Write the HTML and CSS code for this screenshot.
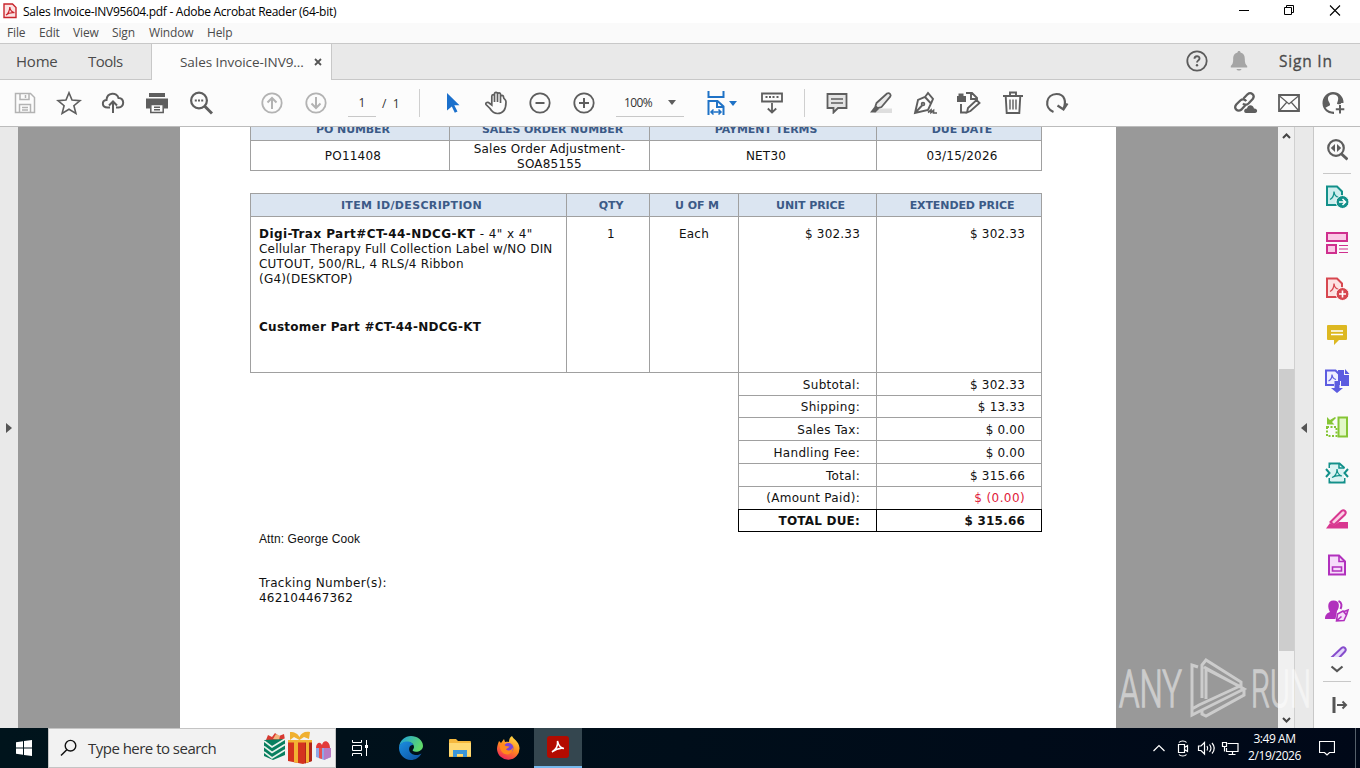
FILE: index.html
```html
<!DOCTYPE html>
<html lang="en">
<head>
<meta charset="UTF-8">
<meta name="viewport" content="width=device-width, initial-scale=1.0">
<title>Sales Invoice-INV95604.pdf - Adobe Acrobat Reader (64-bit)</title>
<link rel="stylesheet" href="styles.css">
</head>
<body>

<header class="titlebar">
    <svg class="app-icon" width="14" height="16" viewBox="0 0 14 16"><path d="M1 1h8.500l3.500 3.500v10H1z" fill="#fbe3e3" stroke="#c9252d" stroke-width="1.400"/><path d="M3 12c2-1 4-5 3.800-8C7 7 9 9.600 11.500 9.600 8 9.300 5 10 3 12z" fill="none" stroke="#c9252d" stroke-width="1.200"/></svg>
    <span class="title">Sales Invoice-INV95604.pdf - Adobe Acrobat Reader (64-bit)</span>
    <div class="window-buttons">
        <svg width="46" height="23" viewBox="0 0 46 23"><path d="M17 10.500h10" stroke="#000"/></svg>
        <svg width="46" height="23" viewBox="0 0 46 23"><path d="M16.500 7.500h7v7h-7zM18.500 7.500v-2h7v7h-2" fill="none" stroke="#000"/></svg>
        <svg width="46" height="23" viewBox="0 0 46 23"><path d="M16 5.500l10 10M26 5.500l-10 10" stroke="#000" stroke-width="1.100"/></svg>
    </div>
</header>

<nav class="menubar">
    <span class="m-file">File</span>
    <span class="m-edit">Edit</span>
    <span class="m-view">View</span>
    <span class="m-sign">Sign</span>
    <span class="m-window">Window</span>
    <span class="m-help">Help</span>
</nav>

<div class="tabs">
    <span class="tab home">Home</span>
    <span class="tab tools">Tools</span>
    <div class="tab active">
        <span class="doc-name">Sales Invoice-INV9...</span>
        <svg width="8" height="8" viewBox="0 0 8 8"><path d="M1 1l6 6M7 1L1 7" stroke="#555" stroke-width="1.800"/></svg>
    </div>
    <div class="tabs-right">
        <svg width="22" height="22" viewBox="0 0 22 22"><circle cx="11" cy="11" r="9.700" fill="none" stroke="#5c5c5c" stroke-width="1.800"/><path d="M8.500 8.800c0-3.300 5-3.300 5-.4 0 2-2.500 2-2.500 4.200" fill="none" stroke="#5c5c5c" stroke-width="1.900"/><circle cx="11" cy="15.300" r="1.200" fill="#5c5c5c"/></svg>
        <svg width="18" height="22" viewBox="0 0 18 22"><path d="M9 1c1 0 1.500.6 1.500 1.500C14 3.500 14.800 6 14.800 9c0 4 .7 5.500 2.400 7v1.500H.8V16c1.700-1.500 2.400-3 2.400-7 0-3 .8-5.500 4.300-6.500C7.500 1.600 8 1 9 1zM6.500 19h5c-.5 2-4.500 2-5 0z" fill="#a5a5a5"/></svg>
        <span class="sign-in">Sign In</span>
    </div>
</div>

<div class="toolbar">
    <div class="group">
        <div class="tool"><svg class="light" width="22" height="22" viewBox="0 0 22 22"><path d="M1.500 1.500h15l4 4v15h-19zM6 1.500v6h9v-6M11.500 3v3M5.500 20v-7.500h11V20M8 15.500h6M8 18h6" stroke-width="1.500"/></svg></div>
        <div class="tool"><svg width="26" height="24" viewBox="0 0 26 24"><path d="M13 1.800l3 7.300 8 .6-6.100 5 2 7.700L13 18.200l-6.900 4.200 2-7.700L2 9.700l8-.6z" stroke-width="1.600"/></svg></div>
        <div class="tool"><svg width="24" height="22" viewBox="0 0 24 22"><path d="M9 15.500H6.500C.5 15.500.500 8.500 5.500 8 6 0 16 0 17.500 6c6-.5 6.500 9.500 0 9.500H15M12 21V9.500M8 13.500l4-4 4 4" stroke-width="2"/></svg></div>
        <div class="tool"><svg width="22" height="22" viewBox="0 0 22 22"><path class="fill" d="M3 1h16v4H3zM0 6.500h22v10h-4v-4H4v4H0z"/><path d="M4.800 12.500h12.400v8H4.800zM8 15.200h6M8 17.800h6" stroke-width="1.500"/></svg></div>
        <div class="tool"><svg width="24" height="24" viewBox="0 0 24 24"><circle cx="10" cy="9.500" r="7.900" stroke-width="2.200"/><path d="M15.500 15l7.500 7.500" stroke-width="3"/><path d="M5.800 9.500h2M9 9.500h2M12.200 9.500h2" stroke-width="2"/></svg></div>
    </div>
    <div class="group pages">
        <div class="tool"><svg class="light" width="22" height="22" viewBox="0 0 22 22"><circle cx="11" cy="11" r="9.700"/><path d="M11 17V6M6.500 10.500L11 6l4.500 4.500" stroke-width="2"/></svg></div>
        <div class="tool"><svg class="light" width="22" height="22" viewBox="0 0 22 22"><circle cx="11" cy="11" r="9.700"/><path d="M11 5v11M6.500 11.500L11 16l4.500-4.500" stroke-width="2"/></svg></div>
        <span class="page-field">1</span>
        <span class="page-total">/&nbsp; 1</span>
    </div>
    <div class="divider"></div>
    <div class="group">
        <div class="tool pointer"><svg width="14" height="20" viewBox="0 0 14 20"><path d="M1 0l12.500 12.300H8.300l3.200 6.200-2.700 1.300-3-6.300L1 17.500z" fill="#1b70cc" stroke="none"/></svg></div>
        <div class="tool"><svg width="24" height="24" viewBox="0 0 24 24"><path d="M7.800 14V5.300c0-2.300 2.700-2.300 2.700 0V11 3c0-2.300 3-2.300 3 0v8V3.500c0-2.300 3-2.300 3 0V12 6c0-2.300 3-2.300 3 0 .3 3 2.500 2 2.500 5 0 6-1.500 11.500-8.500 11.500-4 0-6-2.500-7.500-5L2 13.500c-1-2 2-3 3.500-1.200z" stroke-width="1.700"/></svg></div>
        <div class="tool"><svg width="22" height="22" viewBox="0 0 22 22"><circle cx="11" cy="11" r="9.700"/><path d="M6.500 11h9" stroke-width="2"/></svg></div>
        <div class="tool"><svg width="22" height="22" viewBox="0 0 22 22"><circle cx="11" cy="11" r="9.700"/><path d="M6 11h10M11 6v10" stroke-width="2"/></svg></div>
    </div>
    <div class="zoom-field"><span>100%</span><i class="caret"></i></div>
    <div class="fit">
        <svg width="18" height="24" viewBox="0 0 18 24"><path d="M1.500 0v6h15V0M1.500 24V10h9l6 5.500V24M10 10.500v5.500h6.500" stroke="#1f72c6" stroke-width="2"/><path d="M4 21h10M6.500 18.500L4 21l2.500 2.500M11.500 18.500L14 21l-2.500 2.500" stroke="#1f72c6" stroke-width="1.500"/></svg>
        <i class="caret blue"></i>
    </div>
    <div class="tool keys"><svg width="22" height="22" viewBox="0 0 22 22"><path d="M1 1.500h20v8H1zM11 11v9M6.800 16.500L11 20.500l4.200-4"/><path d="M4.500 5h2M8 5h2M11.500 5h2M15.500 5h2" stroke-width="1.800"/></svg></div>
    <div class="divider second"></div>
    <div class="group">
        <div class="tool"><svg width="22" height="22" viewBox="0 0 22 22"><path d="M1.500 2h19v14H12l-4.500 4.500V16h-6z" fill="#e4e4e4"/><path d="M5 7h12M5 11h12" stroke-width="1.500"/></svg></div>
        <div class="tool"><svg width="24" height="24" viewBox="0 0 24 24"><path d="M9 17.500h14v4.500H5z" fill="#dedede" stroke="none"/><path d="M7.500 12L18 2.500c2.200-1.300 4.700 1 3.200 3.200L12.500 16l-4 1.200-2-2.200z" fill="#e9e9e9"/><path class="fill" d="M6 15l4 3-3.500 3.500H1z"/></svg></div>
        <div class="tool"><svg width="24" height="24" viewBox="0 0 24 24"><path d="M2 22l3-13 7-3 6 6.500-3 6.500zM2 22l7-7.500M12 6l3-4 5 6-2 4.500" stroke-width="1.900"/><circle cx="10" cy="13" r="1.400"/><path d="M15 21.500l3-2.500v2.500l2.500-2v2.500H24" stroke-width="1.700"/></svg></div>
        <div class="tool"><svg width="24" height="24" viewBox="0 0 24 24"><path d="M4 13v8.500h6M9 2h6l5 5v2M14 2v6h6M10 21.500l1-4.500 8.500-8 3 3-9 8z" stroke-width="1.900"/><path class="fill" d="M0 5h9v6H0zM1.500 2.500h5V6h-5z"/></svg></div>
        <div class="tool"><svg width="20" height="24" viewBox="0 0 20 24"><path d="M0 5h20M7 5V1.500h6V5M2.700 5l1 17h12.600l1-17" stroke-width="1.900"/><path d="M7 8.500v10M10 8.500v10M13 8.500v10" stroke-width="1.400"/></svg></div>
        <div class="tool"><svg width="24" height="22" viewBox="0 0 24 22"><path d="M8.500 20C-1.500 16 1 2 11.500 2 20 2 21.500 10 18.500 16.500" stroke-width="2.200"/><path d="M22.500 11.500l-4 6-6-4" stroke-width="2.200"/></svg></div>
    </div>
    <div class="group share">
        <div class="tool"><svg width="26" height="24" viewBox="0 0 26 24"><path d="M11.500 7.500l4-4.200c3.500-3 8 1 5.200 4.700l-4.200 4.500c-2 1.800-4 1.500-5.500 0M13.500 14L9.500 18.500c-4 3-8.200-1-5.200-5l4-4c2.300-2 4.700-1 5.900.7" stroke-width="2.300"/><path class="fill" d="M14 22c-3-.5-2-5 1-4.500 1-4.500 6-4 7 0 4-.3 4 4.300 1 4.500z"/></svg></div>
        <div class="tool"><svg width="22" height="18" viewBox="0 0 22 18"><path d="M1 1h20v16H1z"/><path d="M1 1.500l10 8.500 10-8.500M1.500 16.500l7-8M20.500 16.500l-7-8" stroke-width="1.200"/></svg></div>
        <div class="tool"><svg width="24" height="24" viewBox="0 0 24 24"><path class="fill" d="M12 1a10.500 10.500 0 0 1 10.500 11h-2.300c-.2 1.200-1.500 1.600-4 1-.5-1 .8-2 1-5.500C17.200 2.200 7 2.200 7 7.500c0 3.500 2.500 4.500 2 6.500-.3 1.200-3 1.500-4.500 2.800 2 2.600 5 4 8.500 4V23A11 11 0 1 1 12 1z"/><path d="M19 14v8.500M14.800 18.200h8.500" stroke-width="2"/></svg></div>
    </div>
</div>

<main class="workspace">
    <div class="nav-strip"><i class="arrow right"></i></div>
    <div class="canvas">
        <article class="page">
            <section class="grid order">
                <div class="head">PO NUMBER</div>
                <div class="head">SALES ORDER NUMBER</div>
                <div class="head">PAYMENT TERMS</div>
                <div class="head">DUE DATE</div>
                <div class="cell">PO11408</div>
                <div class="cell tight">Sales Order Adjustment-<br>SOA85155</div>
                <div class="cell">NET30</div>
                <div class="cell">03/15/2026</div>
            </section>

            <section class="grid items">
                <div class="head wide">ITEM ID/DESCRIPTION</div>
                <div class="head">QTY</div>
                <div class="head">U OF M</div>
                <div class="head">UNIT PRICE</div>
                <div class="head">EXTENDED PRICE</div>
                <div class="cell description">
                    <p><span class="part"><b>Digi-Trax Part#CT-44-NDCG-KT</b> - 4" x 4"</span><br>Cellular Therapy Full Collection Label w/NO DIN<br>CUTOUT, 500/RL, 4 RLS/4 Ribbon<br>(G4)(DESKTOP)</p>
                    <p><b>Customer Part #CT-44-NDCG-KT</b></p>
                </div>
                <div class="cell top">1</div>
                <div class="cell top unit">Each</div>
                <div class="cell top money">$ 302.33</div>
                <div class="cell top money">$ 302.33</div>
            </section>

            <section class="grid totals">
                <div class="cell money label">Subtotal:</div><div class="cell money">$ 302.33</div>
                <div class="cell money label">Shipping:</div><div class="cell money">$ 13.33</div>
                <div class="cell money label">Sales Tax:</div><div class="cell money">$ 0.00</div>
                <div class="cell money label">Handling Fee:</div><div class="cell money">$ 0.00</div>
                <div class="cell money label">Total:</div><div class="cell money">$ 315.66</div>
                <div class="cell money label">(Amount Paid):</div><div class="cell money paid">$ (0.00)</div>
            </section>
            <section class="grid due">
                <div class="cell money">TOTAL DUE:</div><div class="cell money">$ 315.66</div>
            </section>

            <p class="attn">Attn: George Cook</p>
            <p class="tracking"><span>Tracking Number(s):</span><br>462104467362</p>
        </article>
    </div>
    <div class="scrollbar">
        <svg width="15" height="17" viewBox="0 0 15 17"><path d="M4 11l3.500-3.500L11 11" fill="none" stroke="#444" stroke-width="2"/></svg>
        <div class="thumb"></div>
        <svg width="15" height="17" viewBox="0 0 15 17"><path d="M4 7l3.500 3.500L11 7" fill="none" stroke="#444" stroke-width="2"/></svg>
    </div>
    <div class="tools-strip"><i class="arrow left"></i></div>
    <aside class="tools-panel">
        <div class="side"><svg width="22" height="22" viewBox="0 0 22 22"><circle cx="10" cy="9" r="7.800" stroke="#5e5e5e" stroke-width="2.200"/><path d="M15 14.500l6.500 6" stroke="#5e5e5e" stroke-width="3"/><path d="M9 5v8L4.800 9zM11 5v8l4.200-4z" fill="#5e5e5e"/></svg></div>
        <div class="line"></div>
        <div class="side"><svg width="24" height="24" viewBox="0 0 24 24"><path d="M2 1.500h10l5 5V20H2z" fill="#cfeeee" stroke="#12908a" stroke-width="2"/><path d="M5 14.500c3-1.500 4-4.500 4-8 .3 3.500 2 5.500 5 6" stroke="#12908a" stroke-width="1.300"/><circle cx="17.500" cy="17" r="6.500" fill="#12908a" stroke="#fff" stroke-width="1"/><path d="M14 17h6M17.500 14l3 3-3 3" stroke="#fff" stroke-width="1.500"/></svg></div>
        <div class="side"><svg width="24" height="24" viewBox="0 0 24 24"><path d="M2 2h20v8H2zM2 14h9v8H2z" fill="#fbc9e6" stroke="#cf2f8e" stroke-width="2"/><path d="M14 14.500h9M14 18h9M14 21.500h9" stroke="#cf2f8e" stroke-width="1"/></svg></div>
        <div class="side"><svg width="24" height="24" viewBox="0 0 24 24"><path d="M2 1.500h10l5 5V20H2z" fill="#fde3e3" stroke="#d7474f" stroke-width="2"/><path d="M5 14.500c3-1.500 4-4.500 4-8 .3 3.500 2 5.500 5 6" stroke="#d7474f" stroke-width="1.300"/><circle cx="17.500" cy="17" r="6.500" fill="#d7474f" stroke="#fff" stroke-width="1"/><path d="M14 17h7M17.500 13.500v7" stroke="#fff" stroke-width="1.600"/></svg></div>
        <div class="side"><svg width="22" height="22" viewBox="0 0 22 22"><path d="M2 1h18q1 0 1 1v13q0 1-1 1h-7l-5 5v-5H2q-1 0-1-1V2q0-1 1-1z" fill="#ddb821"/><path d="M5 7h12M5 10.500h12" stroke="#fff" stroke-width="1.600"/></svg></div>
        <div class="side"><svg width="26" height="24" viewBox="0 0 26 24"><path d="M10 16H2V1.500h9.500L15 5v11" fill="#efefff" stroke="#5c5ce0" stroke-width="2"/><path d="M4.500 12c2.500-1 3.500-4 3.500-6.500.3 3 2 4.500 4 5" stroke="#5c5ce0" stroke-width="1.200"/><path d="M14 1h6v5h5v11h-8v-5h-3zM21 0l4.500 5H21zM10.500 12h5v7H19l-6 5-6-5h3.500z" fill="#5c5ce0"/></svg></div>
        <div class="side"><svg width="24" height="22" viewBox="0 0 24 22"><path d="M13.500 1.500H22v19h-8.500z" fill="#e2f7c7" stroke="#85c535" stroke-width="2"/><path d="M2 11h9.500v9H2z" stroke="#85c535" stroke-width="2" stroke-dasharray="2 1.500"/><path d="M2 1v7.500h7.500L7 6l4-4-1-1-5 3z" fill="#85c535"/></svg></div>
        <div class="side"><svg width="24" height="22" viewBox="0 0 24 22"><path d="M4.500 6V1.500h10l5 4.500M4.500 16v4.500h15V16" stroke="#12908a" stroke-width="2"/><path d="M5 3h9l5 4v12H5z" fill="#daf3f3"/><path d="M14 1v5h5.500" stroke="#12908a" stroke-width="1.500"/><path d="M7 15.500c4-1.500 5-5 5-8.500.3 3.500 2 6.500 5 7-4-.7-7-.3-10 1.500z" stroke="#12908a" stroke-width="1.200"/><path d="M1 7l3.500 4L1 15M23 7l-3.500 4 3.500 4" stroke="#12908a" stroke-width="2"/></svg></div>
        <div class="side"><svg width="24" height="22" viewBox="0 0 24 22"><path d="M1 20.500L5 15l4 2.500 5-3.500h9v6.500z" fill="#d83790"/><path d="M5.500 14L16.500 3c2.500-2 5.500 1 3.500 3.500L9 17z" fill="#fbd0e6" stroke="#d83790" stroke-width="2"/></svg></div>
        <div class="side"><svg width="20" height="22" viewBox="0 0 20 22"><path d="M2 1.500h10l6 6v13H2z" fill="#f6dcfa" stroke="#b130bd" stroke-width="2"/><path d="M12 1.500v6h6M5.500 13h9v4h-9z" stroke="#b130bd" stroke-width="1.600"/></svg></div>
        <div class="side"><svg width="26" height="24" viewBox="0 0 26 24"><path d="M1 20c0-4 2-6 5-7C3.500 9 3 1.500 9.500 1.500S16 8 13 12l-1.500 8z" fill="#b130bd"/><path d="M14.500 2c3.500 1.500 3.500 5 2 8" stroke="#b130bd" stroke-width="2"/><path d="M12.500 22l1-7 5.500-3 3.500 4-2.500 5.500zM12.500 22l5-4.500M20 12.500l4-1.500-1.500 5" fill="#f6dcfa" stroke="#b130bd" stroke-width="1.600"/></svg></div>
        <div class="side cut"><svg width="24" height="22" viewBox="0 0 24 22"><path d="M6 13L16.500 3c2.500-2 5.500 1 3.500 3.500L11 16z" fill="#e3d7fb" stroke="#864ccc" stroke-width="2"/></svg></div>
        <div class="more"><svg width="14" height="8" viewBox="0 0 14 8"><path d="M1.500 1.500L7 6l5.500-4.500" stroke="#555" stroke-width="2.200"/></svg></div>
        <div class="line"></div>
        <div class="side last"><svg width="16" height="16" viewBox="0 0 16 16"><path d="M2 0v16" stroke="#555" stroke-width="3"/><path d="M5 8h9M10.500 4.500L14 8l-3.500 3.500" stroke="#555" stroke-width="2"/></svg></div>
    </aside>
</main>

<footer class="taskbar">
    <div class="start"><svg width="16" height="16" viewBox="0 0 16 16"><path d="M0 2.200L7 1.200v6.300H0zM8 1.100L16 0v7.500H8zM0 8.500h7v6.300l-7-1zM8 8.500h8V16l-8-1.100z" fill="#fff"/></svg></div>
    <div class="search">
        <svg width="18" height="18" viewBox="0 0 18 18"><circle cx="10.500" cy="6.700" r="5.300" fill="none" stroke="#111" stroke-width="1.400"/><path d="M6.800 10.800L1 16.500" stroke="#111" stroke-width="1.500"/></svg>
        <span>Type here to search</span>
        <svg class="gifts" width="68" height="34" viewBox="0 0 68 34">
            <path d="M2 9l2-5 4 2 3-4 4 3 5-2 1 6z" fill="#d83a32"/><path d="M9 8l3-5 4 2-1 4z" fill="#f3b37c"/>
            <path d="M0 9l21-1v16L9 29 0 25z" fill="#087f5f"/><path d="M0 10l8 6 13-8M0 15.500l8 6 13-8M0 21l8 6 13-8" fill="none" stroke="#e9f3ec" stroke-width="1.600"/>
            <path d="M24 10h24v20l-9 3-15-3z" fill="#d4321f"/><path d="M41 10h7v20l-7 2.500z" fill="#b0261a"/><path d="M30 10h4v22l-4-.7zM42 10h3v21l-3 1zM24 9h24v2.500H24z" fill="#f2b233"/><path d="M26 1c5 0 8 2 9.500 5C37 2 41 0 46 1l-1 7-5-2-4.500 3L30 6l-4 3z" fill="#f0b030"/>
            <path d="M52 17h15v9l-7 3-8-3z" fill="#8fa8e8"/><path d="M60 17h7v9l-7 3z" fill="#b77bc4"/><path d="M55 17h3v11l-3-1z" fill="#e64f50"/><path d="M52 17c0-5 4-7 6-3 1-6 8-5 8 3z" fill="#e23b3b"/>
        </svg>
    </div>
    <div class="task view"><svg width="18" height="18" viewBox="0 0 18 18"><path d="M1.500 1v2.500h9V1M1.500 17v-2.500h9V17M1.500 6.500h9v5h-9zM15.500 1v16" fill="none" stroke="#fff"/><path d="M14 6h3v3h-3z" fill="#fff"/></svg></div>
    <div class="task edge">
        <svg width="24" height="24" viewBox="0 0 24 24">
            <defs><linearGradient id="edgeTop" x1="0" y1="0" x2="1" y2=".4"><stop offset="0" stop-color="#1b9de2"/><stop offset="1" stop-color="#5fd96a"/></linearGradient><linearGradient id="edgeLow" x1="0" y1="0" x2="1" y2="1"><stop offset="0" stop-color="#1b8ee0"/><stop offset="1" stop-color="#0c4f9e"/></linearGradient></defs>
            <path d="M0 11C1 4 6 0 12 0s12 4 12 10c0 5-7 7-10 5-1-1 1-2 1-4 0-3-3-5-6.500-5S1 8 0 11z" fill="url(#edgeTop)"/>
            <path d="M0 12c0-4 4-6.500 8-6.500 4 0 6 2 6 3.500-5-1-6 9 2 10 3 .4 5-.5 6.500-1.500C20 22 16 24 12 24 5 24 0 18 0 12z" fill="url(#edgeLow)"/>
        </svg>
    </div>
    <div class="task folder"><svg width="22" height="18" viewBox="0 0 22 18"><path d="M0 1q0-1 1-1h6l2 2h12q1 0 1 1v15H0z" fill="#f5b83d"/><path d="M0 4h22v13H0z" fill="#ffd972"/><path d="M4 18v-7h14v7h-4v-3H8v3z" fill="#3d96d8"/></svg></div>
    <div class="task firefox">
        <svg width="24" height="24" viewBox="0 0 24 24">
            <defs><linearGradient id="fox" x1=".8" y1="0" x2=".3" y2="1"><stop offset="0" stop-color="#ffe14a"/><stop offset=".5" stop-color="#ff8a1e"/><stop offset="1" stop-color="#f0245c"/></linearGradient></defs>
            <path d="M3 5l2 2 3-4 1 3c2-.5 3-.5 4 0 0-3 1-5 3-6 1 3 7 5 7.500 12A11 11 0 0 1 1 13c0-3 1-5 2-8z" fill="url(#fox)"/><circle cx="12.500" cy="12" r="5" fill="#7a45d8"/><path d="M3.500 9c3-2 5-1 6 1l4 .5c-1 2-3 1.500-3.500 3 3 2 5 1 7-2 0 5-4 8-8 6.500C5 17 4 12 3.500 9z" fill="#ff8a1e"/>
        </svg>
    </div>
    <div class="task running"><svg width="22" height="22" viewBox="0 0 22 22"><rect width="22" height="22" rx="3" fill="#b30b00"/><path d="M5 16c4-2.500 6-7 5.500-11 1 4.500 3 7 6.500 7.500-4.500-.8-8 .5-12 3.500z" fill="none" stroke="#fff" stroke-width="1.500"/></svg></div>
    <div class="tray">
        <svg width="24" height="20" viewBox="0 0 24 20"><path d="M6.500 13l5.500-5.500 5.500 5.500"/></svg>
        <svg width="24" height="20" viewBox="0 0 24 20"><path d="M7.500 6.500h6v8h-6zM13.500 9.500l3-2v6l-3-2M8 4.500c1.500-2 6-2 7.500 0M8 16.500c1.500 2 6 2 7.500 0"/></svg>
        <svg width="24" height="20" viewBox="0 0 24 20"><path d="M3.500 8v4.500h2.500l3.500 3.500V4.500L6 8zM12 8c1 1.500 1 3 0 4.500M14.500 6.500c2 2.500 2 5 0 7.500M17 5c3 3.500 3 7 0 10.500"/></svg>
        <svg width="24" height="20" viewBox="0 0 24 20"><path d="M8.500 5.500H19v8H7.500V10M13.500 13.500v3M9.500 16.500h7M3.500 4.500h4v4h-4zM5.500 8.500v5"/></svg>
        <div class="clock"><span>3:49 AM</span><br><span class="date">2/19/2026</span></div>
        <svg class="notify" width="16" height="16" viewBox="0 0 16 16"><path d="M.500 1.500h15v11h-5L8 15l-2.500-2.500h-5z"/></svg>
        <i class="show-desktop"></i>
    </div>
</footer>

<svg class="watermark" width="196" height="64" viewBox="0 0 196 64">
    <text x="1" y="51" textLength="63" lengthAdjust="spacingAndGlyphs">ANY</text>
    <text x="133" y="51" textLength="60" lengthAdjust="spacingAndGlyphs">RUN</text>
    <path d="M80 11l-6-2v44l7-4 41-19M84 42V9l4-5 35 22v5L88 13v30M74 52v7l8-4 44-22-40-22M84 54v4l4 2 38-21v-5"/>
</svg>

</body>
</html>
```
FILE: styles.css
```css
* {
    box-sizing: border-box;
}
body {
    margin: 0;
    width: 1360px;
    height: 768px;
    overflow: hidden;
    position: relative;
    display: flex;
    flex-direction: column;
    background: #fff;
    color: #111;
    font-family: "Open Sans", "Noto Sans", sans-serif;
    font-size: 12px;
}
p {
    margin: 0;
}
svg {
    display: block;
    flex: none;
}
span {
    white-space: nowrap;
}

/* window chrome */
.titlebar {
    height: 23px;
    flex: none;
    display: flex;
    align-items: center;
    padding-left: 3px;
    color: #000;
}
.app-icon {
    margin-top: -2px;
}
.title {
    margin-left: 6px;
    letter-spacing: -0.28px;
}
.window-buttons {
    display: flex;
    margin-left: auto;
}
.menubar {
    height: 20px;
    flex: none;
    display: flex;
    align-items: center;
    padding-left: 7px;
    padding-bottom: 2px;
    background: #fafafa;
    color: #4b4b4b;
    letter-spacing: -0.15px;
}
.m-file { width: 32px; }
.m-edit { width: 34px; }
.m-view { width: 39px; }
.m-sign { width: 37px; }
.m-window { width: 58px; }
.tabs {
    height: 37px;
    flex: none;
    display: flex;
    align-items: stretch;
    background: #e9e9e9;
    border-top: 1px solid #c8c8c8;
    border-bottom: 1px solid #c8c8c8;
    color: #4b4b4b;
}
.tab {
    display: flex;
    align-items: center;
    padding-bottom: 1px;
    font-size: 15px;
}
.home {
    width: 88px;
    padding-left: 16px;
    letter-spacing: -0.2px;
}
.tools {
    width: 63px;
    letter-spacing: -0.5px;
}
.tab.active {
    width: 181px;
    height: 36px;
    padding-left: 28px;
    background: #fcfcfc;
    border-left: 1px solid #c8c8c8;
    border-right: 1px solid #c8c8c8;
}
.doc-name {
    width: 134px;
    font-size: 13.5px;
    letter-spacing: -0.05px;
}
.tabs-right {
    display: flex;
    align-items: center;
    margin-left: auto;
    padding-right: 25px;
    padding-bottom: 2px;
    gap: 22px;
}
.sign-in {
    margin-left: 9px;
    width: 56px;
    font-size: 15.5px;
    letter-spacing: 0.8px;
    -webkit-text-stroke: 0.3px #4b4b4b;
}

.toolbar {
    height: 47px;
    flex: none;
    display: flex;
    align-items: center;
    padding: 0 5px 0 3px;
    background: #fcfcfc;
    border-bottom: 1px solid #bcbcbc;
    color: #333;
}
.group {
    display: flex;
    align-items: center;
}
.tool {
    width: 44px;
    height: 46px;
    flex: none;
    display: flex;
    align-items: center;
    justify-content: center;
}
.tool svg,
.fit svg {
    fill: none;
    stroke: #5e5e5e;
    stroke-width: 1.800;
}
.tool svg.light {
    stroke: #b3b3b3;
}
.tool svg .fill {
    fill: #5e5e5e;
    stroke: none;
}
.tool.pointer {
    padding-left: 2px;
}
.tool.keys {
    padding-left: 2px;
}
.pages {
    width: 169px;
    margin-left: 27px;
}
.page-field {
    width: 28px;
    height: 28px;
    line-height: 28px;
    margin-left: 10px;
    text-align: center;
    border-bottom: 1px solid #c8c8c8;
}
.page-total {
    margin-left: 6px;
}
.divider {
    width: 1px;
    height: 28px;
    background: #cfcfcf;
    margin-right: 10px;
}
.divider.second {
    margin: 0 10px 0 11px;
}
.zoom-field {
    width: 68px;
    height: 28px;
    margin-left: 10px;
    padding: 0 8px;
    display: flex;
    align-items: center;
    justify-content: space-between;
    border-bottom: 1px solid #c8c8c8;
    letter-spacing: -0.6px;
}
.caret {
    border: 4px solid transparent;
    border-top: 5px solid #5e5e5e;
    border-bottom: 0;
}
.caret.blue {
    border-top-color: #1f72c6;
}
.fit {
    width: 42px;
    margin: 0 0 0 23px;
    display: flex;
    align-items: center;
    gap: 4px;
}
.share {
    margin-left: auto;
}

/* document area */
.workspace {
    height: 601px;
    flex: none;
    display: flex;
}
.nav-strip {
    width: 18px;
    background: #e9e9e9;
    display: flex;
    align-items: center;
    padding-left: 6px;
}
.arrow {
    border: 5px solid transparent;
}
.arrow.right {
    border-left: 6px solid #555;
    border-right: 0;
}
.arrow.left {
    border-right: 6px solid #555;
    border-left: 0;
}
.canvas {
    width: 1260px;
    height: 601px;
    overflow: hidden;
    padding: 0 162px;
    background: #999;
}
.page {
    width: 936px;
    height: 601px;
    overflow: hidden;
    padding-left: 70px;
    background: #fff;
    font-family: "DejaVu Sans", sans-serif;
    font-size: 12px;
    line-height: 15px;
    letter-spacing: 0.2px;
}
.grid {
    display: grid;
    width: max-content;
    border-left: 1px solid #a0a0a0;
    border-top: 1px solid #a0a0a0;
}
.head,
.cell {
    display: flex;
    align-items: center;
    justify-content: center;
    padding-left: 6px;
    border-right: 1px solid #a0a0a0;
    border-bottom: 1px solid #a0a0a0;
}
.cell {
    padding-top: 2px;
}
.head {
    background: #dbe5f1;
    color: #3b5a87;
    font-size: 11px;
    font-weight: bold;
    letter-spacing: -0.1px;
}
.head.wide {
    letter-spacing: 0.35px;
}
.order {
    grid-template-columns: 199px 200px 227px 165px;
    grid-template-rows: 23px 30px;
    margin-top: -10px;
}
.tight {
    padding-left: 0;
    text-align: center;
}
.items {
    grid-template-columns: 316px 83px 89px 138px 165px;
    grid-template-rows: 23px 156px;
    margin-top: 22px;
}
.cell.top {
    align-items: flex-start;
    padding-top: 10px;
}
.cell.unit {
    padding-left: 0;
}
.cell.description {
    display: block;
    padding: 10px 0 0 8px;
    white-space: nowrap;
}
.part {
    letter-spacing: 0.44px;
}
.description p + p {
    margin-top: 33px;
    letter-spacing: 0.27px;
}
.cell.money {
    justify-content: flex-end;
    padding-right: 16px;
}
.cell.label {
    letter-spacing: 0.32px;
}
.totals,
.due {
    grid-template-columns: 138px 165px;
    margin-left: 488px;
    border-top: 0;
}
.totals {
    grid-template-rows: 23px 22px 23px 23px 23px 22px;
}
.totals .cell:nth-last-child(-n+2) {
    border-bottom: 0;
    padding-top: 0;
}
.cell.paid {
    color: #e0203a;
    letter-spacing: 0.4px;
}
.grid.due {
    grid-template-rows: 22px;
    border: 1px solid #000;
    border-right: 0;
    border-bottom: 0;
    font-weight: bold;
}
.due .cell {
    border-color: #000;
}
.attn {
    margin: 0 0 0 9px;
    font-family: "Liberation Sans", Arial, sans-serif;
    font-size: 12px;
    letter-spacing: 0.1px;
}
.tracking {
    margin: 29px 0 0 9px;
}
.tracking span {
    letter-spacing: 0.33px;
}
.scrollbar {
    width: 17px;
    display: flex;
    flex-direction: column;
    padding-left: 1px;
    background: #f0f0f0;
    border-right: 1px solid #d0d0d0;
}
.thumb {
    height: 282px;
    margin-top: 225px;
    margin-bottom: 60px;
    background: #cdcdcd;
}
.tools-strip {
    width: 19px;
    display: flex;
    align-items: center;
    justify-content: center;
    background: #e9e9e9;
    border-right: 1px solid #c8c8c8;
}
.tools-panel {
    width: 46px;
    display: flex;
    flex-direction: column;
    align-items: center;
    background: #fafafa;
}
.tools-panel svg {
    fill: none;
}
.side {
    height: 46px;
    flex: none;
    display: flex;
    align-items: center;
    justify-content: center;
}
.side.cut {
    height: 23px;
    overflow: hidden;
    align-items: flex-start;
    padding-top: 11px;
}
.side.last {
    padding-left: 5px;
}
.more {
    height: 24px;
    display: flex;
    align-items: center;
}
.line {
    width: 28px;
    height: 1px;
    flex: none;
    background: #c8c8c8;
}

/* taskbar */
.taskbar {
    height: 40px;
    flex: none;
    display: flex;
    background: linear-gradient(90deg, #00141c, #000818);
    color: #fff;
}
.start {
    width: 48px;
    display: flex;
    align-items: center;
    justify-content: center;
}
.search {
    width: 288px;
    display: flex;
    align-items: center;
    padding-left: 11px;
    background: #f2f2f2;
    border: 1px solid #c4c4c4;
    color: #333;
    font-size: 15px;
}
.search span {
    margin-left: 10px;
    letter-spacing: -0.52px;
}
.gifts {
    margin-left: auto;
    margin-right: 3px;
}
.task {
    display: flex;
    align-items: center;
    justify-content: center;
}
.view {
    width: 48px;
}
.edge {
    width: 54px;
}
.folder {
    width: 44px;
}
.firefox {
    width: 52px;
}
.running {
    width: 48px;
    background: #34464f;
    border-bottom: 2px solid #76b9ed;
}
.tray {
    display: flex;
    align-items: center;
    margin-left: auto;
}
.tray svg {
    fill: none;
    stroke: #fff;
    stroke-width: 1.200;
}
.clock {
    width: 63px;
    text-align: center;
    line-height: 17px;
    letter-spacing: -0.45px;
    padding-bottom: 2px;
}
.notify {
    margin-left: 13px;
}
.show-desktop {
    width: 5px;
    height: 40px;
    margin-left: 20px;
    border-left: 1px solid #55606a;
}

.watermark {
    position: absolute;
    left: 1118px;
    top: 656px;
    opacity: 0.5;
}
.watermark text {
    font-family: "Roboto", sans-serif;
    font-size: 51px;
    font-weight: 300;
    fill: #fff;
    stroke: #fff;
    stroke-width: 1.300;
}
.watermark path {
    fill: none;
    stroke: #fff;
    stroke-width: 3;
}
```
